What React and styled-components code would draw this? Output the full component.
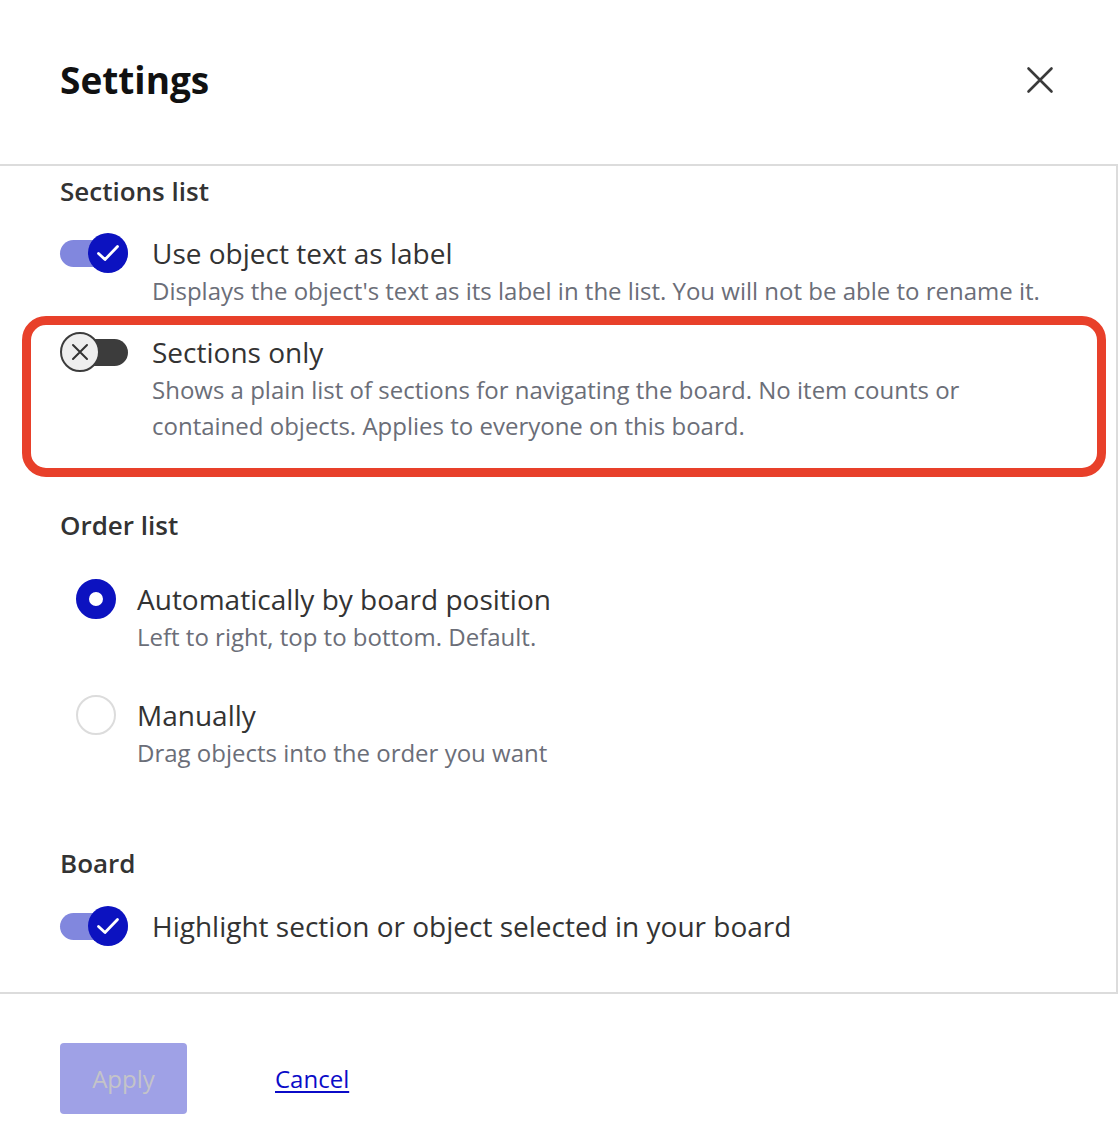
import React from "react";
import styled, { createGlobalStyle } from "styled-components";

const Global = createGlobalStyle`
  html, body { margin: 0; padding: 0; background: #fff; }
  body { font-family: "Open Sans", "Noto Sans", sans-serif; color: #333; }
  * { box-sizing: border-box; }
`;

const Dialog = styled.div`
  width: 1118px;
  height: 1146px;
  display: flex;
  flex-direction: column;
  overflow: hidden;
`;

const Header = styled.header`
  height: 164px;
  padding: 0 58px 4px 60px;
  display: flex;
  align-items: center;
  justify-content: space-between;
`;

const Title = styled.h1`
  margin: 0;
  font-size: 37px;
  font-weight: 700;
  color: #111;
  line-height: 48px;
`;

const CloseButton = styled.button`
  border: 0;
  background: none;
  padding: 0;
  width: 40px;
  height: 40px;
  display: flex;
  align-items: center;
  justify-content: center;
  cursor: pointer;
`;

const Body = styled.div`
  border-top: 2px solid #dcdcdc;
  border-right: 2px solid #dcdcdc;
  border-bottom: 2px solid #dcdcdc;
  padding: 9px 0 46px 60px;
  display: flex;
  flex-direction: column;
`;

const SectionTitle = styled.h2`
  margin: ${(p) => p.$top || 0}px 0 0 0;
  font-size: 26px;
  font-weight: 600;
  line-height: 32px;
  color: #333;
`;

const Row = styled.div`
  display: flex;
  align-items: flex-start;
  gap: 24px;
  margin-top: ${(p) => p.$top || 0}px;
  padding-left: ${(p) => p.$indent || 0}px;
`;

const Highlight = styled.div`
  margin: 7px 0 0 -38px;
  width: 1084px;
  border: 9px solid #e8402a;
  border-radius: 24px;
  padding: 7px 0 24px 29px;
`;

const TextCol = styled.div`
  display: flex;
  flex-direction: column;
`;

const Label = styled.div`
  font-size: 28px;
  line-height: 40px;
  color: #333;
`;

const Desc = styled.div`
  font-size: 24px;
  line-height: 36px;
  color: #6b6e78;
  max-width: 900px;
`;

const Track = styled.div`
  position: relative;
  flex: none;
  width: 68px;
  height: 40px;
  display: flex;
  align-items: center;
`;

const TrackBar = styled.div`
  position: absolute;
  left: ${(p) => (p.$on ? 0 : 14)}px;
  right: 0;
  height: 27px;
  border-radius: 14px;
  background: ${(p) => (p.$on ? "#8187de" : "#3c3c3c")};
`;

const Knob = styled.div`
  position: absolute;
  top: 0;
  left: ${(p) => (p.$on ? 28 : 0)}px;
  width: 40px;
  height: 40px;
  border-radius: 50%;
  background: ${(p) => (p.$on ? "#0c12c0" : "#eeeeee")};
  border: ${(p) => (p.$on ? "none" : "2px solid #3c3c3c")};
  display: flex;
  align-items: center;
  justify-content: center;
`;

const Radio = styled.div`
  flex: none;
  width: 40px;
  height: 40px;
  border-radius: 50%;
  border: ${(p) => (p.$checked ? "13px solid #0c12c0" : "2px solid #dcdcdc")};
  background: #fff;
`;

const RadioRow = styled(Row)`
  gap: 21px;
`;

const Footer = styled.footer`
  padding: 49px 0 0 60px;
  display: flex;
  align-items: center;
  gap: 88px;
`;

const ApplyButton = styled.button`
  width: 127px;
  height: 71px;
  border: 0;
  border-radius: 4px;
  background: #9fa1e6;
  color: #c4c4c8;
  font-family: "Open Sans", sans-serif;
  font-size: 24px;
`;

const CancelLink = styled.a`
  font-size: 24px;
  color: #0b0bc8;
  text-decoration: underline;
  text-underline-offset: 3px;
  text-decoration-thickness: 2px;
`;

function Toggle({ on }) {
  return (
    <Track>
      <TrackBar $on={on} />
      <Knob $on={on}>
        {on ? (
          <svg width="24" height="24" viewBox="0 0 24 24">
            <path d="M2.5 12.5 L9 18.5 L21.5 5.5" fill="none" stroke="#fff" strokeWidth="2.8" strokeLinecap="round" strokeLinejoin="round" />
          </svg>
        ) : (
          <svg width="20" height="20" viewBox="0 0 20 20">
            <path d="M3 3 L17 17 M17 3 L3 17" fill="none" stroke="#333" strokeWidth="2" strokeLinecap="round" />
          </svg>
        )}
      </Knob>
    </Track>
  );
}

export default function App() {
  return (
    <>
      <Global />
      <Dialog>
        <Header>
          <Title>Settings</Title>
          <CloseButton aria-label="Close">
            <svg width="28" height="28" viewBox="0 0 28 28">
              <path d="M2.5 2.5 L25.5 25.5 M25.5 2.5 L2.5 25.5" stroke="#3a3a3a" strokeWidth="2.6" strokeLinecap="round" />
            </svg>
          </CloseButton>
        </Header>
        <Body>
          <SectionTitle>Sections list</SectionTitle>
          <Row $top={26}>
            <Toggle on />
            <TextCol>
              <Label>Use object text as label</Label>
              <Desc>Displays the object's text as its label in the list. You will not be able to rename it.</Desc>
            </TextCol>
          </Row>
          <Highlight>
            <Row>
              <Toggle on={false} />
              <TextCol>
                <Label>Sections only</Label>
                <Desc>
                  Shows a plain list of sections for navigating the board. No item counts or contained objects. Applies to everyone on this board.
                </Desc>
              </TextCol>
            </Row>
          </Highlight>
          <SectionTitle $top={32}>Order list</SectionTitle>
          <RadioRow $top={38} $indent={16}>
            <Radio $checked />
            <TextCol>
              <Label>Automatically by board position</Label>
              <Desc>Left to right, top to bottom. Default.</Desc>
            </TextCol>
          </RadioRow>
          <RadioRow $top={40} $indent={16}>
            <Radio />
            <TextCol>
              <Label>Manually</Label>
              <Desc>Drag objects into the order you want</Desc>
            </TextCol>
          </RadioRow>
          <SectionTitle $top={76}>Board</SectionTitle>
          <Row $top={27}>
            <Toggle on />
            <TextCol>
              <Label>Highlight section or object selected in your board</Label>
            </TextCol>
          </Row>
        </Body>
        <Footer>
          <ApplyButton disabled>Apply</ApplyButton>
          <CancelLink href="#">Cancel</CancelLink>
        </Footer>
      </Dialog>
    </>
  );
}
